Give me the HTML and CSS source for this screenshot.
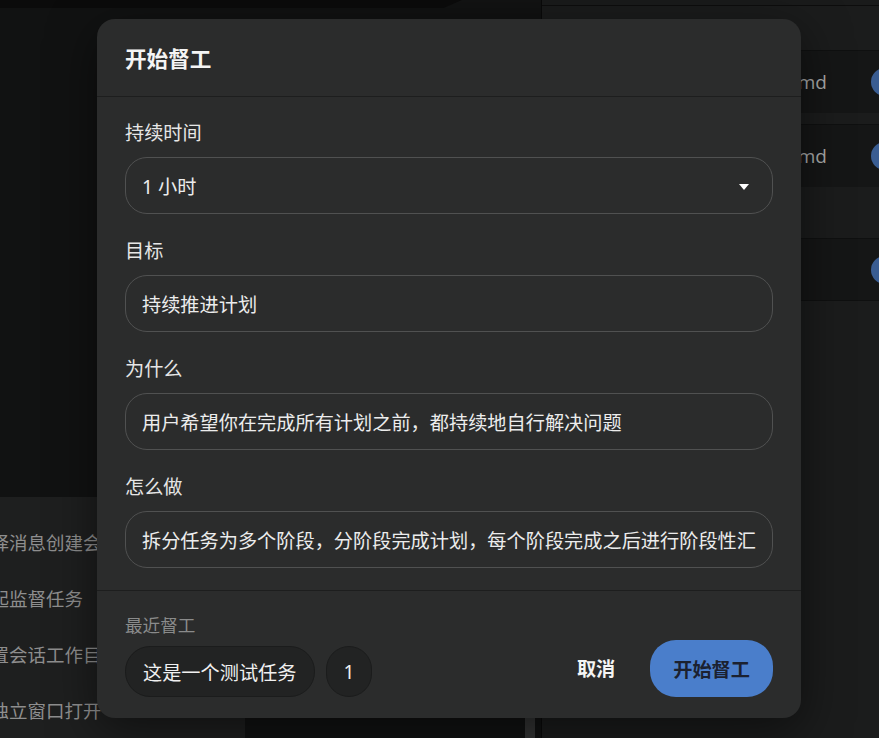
FILE: index.html
```html
<!DOCTYPE html>
<html lang="zh-CN">
<head>
<meta charset="utf-8">
<title>开始督工</title>
<link rel="stylesheet" href="styles.css">
</head>
<body>
<div class="app">
  <div class="left">
    <div class="topbar"></div>
    <div class="left-body">
      <div class="scroll"><div class="thumb"></div></div>
    </div>
  </div>
  <div class="right">
    <div class="r-head"></div>
    <div class="r-sep"></div>
    <div class="r-item"><span class="r-name">CLAUDE.md</span><span class="dot"></span></div>
    <div class="r-gap"></div>
    <div class="r-item"><span class="r-name">AGENTS.md</span><span class="dot"></span></div>
    <div class="r-gap tall"></div>
    <div class="r-item last"><span class="r-name"></span><span class="dot"></span></div>
    <div class="r-rest"></div>
  </div>
</div>

<div class="menu">
  <div class="menu-item">选择消息创建会话</div>
  <div class="menu-item">发起监督任务</div>
  <div class="menu-item">设置会话工作目录</div>
  <div class="menu-item">在独立窗口打开</div>
</div>

<div class="dialog">
  <div class="dlg-head">开始督工</div>
  <div class="dlg-body">
    <div class="field">
      <div class="label">持续时间</div>
      <div class="input select"><span class="val">1 小时</span><span class="caret"></span></div>
    </div>
    <div class="field">
      <div class="label">目标</div>
      <div class="input"><span class="val">持续推进计划</span></div>
    </div>
    <div class="field">
      <div class="label">为什么</div>
      <div class="input"><span class="val">用户希望你在完成所有计划之前，都持续地自行解决问题</span></div>
    </div>
    <div class="field">
      <div class="label">怎么做</div>
      <div class="input"><span class="val">拆分任务为多个阶段，分阶段完成计划，每个阶段完成之后进行阶段性汇报</span></div>
    </div>
  </div>
  <div class="dlg-foot">
    <div class="recent">
      <div class="recent-label">最近督工</div>
      <div class="chips">
        <div class="chip">这是一个测试任务</div>
        <div class="chip">1</div>
      </div>
    </div>
    <div class="actions">
      <div class="btn-cancel">取消</div>
      <div class="btn-primary">开始督工</div>
    </div>
  </div>
</div>
</body>
</html>
```
FILE: styles.css
```css
* { box-sizing: border-box; }
html, body { margin: 0; padding: 0; }
body {
  width: 879px;
  height: 738px;
  overflow: hidden;
  background: #121313;
  font-family: "Noto Sans", "Noto Sans CJK SC", sans-serif;
  position: relative;
}

.app {
  display: grid;
  grid-template-columns: 542px 1fr;
  height: 738px;
}

.left {
  display: flex;
  flex-direction: column;
  background: #121313;
  border-right: 1px solid #0a0a0a;
}
.topbar {
  height: 8px;
  width: 462px;
  background: #0b0b0b;
  clip-path: polygon(0 0, 100% 0, 96% 100%, 0 100%);
}
.left-body {
  flex: 1;
  display: flex;
  justify-content: flex-end;
  padding-right: 6px;
  background: #111212;
}
.scroll { width: 10px; }
.thumb {
  margin-top: 600px;
  height: 200px;
  background: #333434;
}

.right {
  display: flex;
  flex-direction: column;
  overflow: hidden;
  background: #1b1c1c;
}
.r-head { height: 6px; background: #1a1b1b; border-bottom: 1px solid #0d0d0d; }
.r-sep { height: 45px; background: #1b1c1c; border-bottom: 1px solid #0f1010; }
.r-item {
  height: 62px;
  background: #151616;
  display: flex;
  align-items: center;
}
.r-item.last { height: 62px; border-bottom: 1px solid #0f1010; }
.r-name {
  flex: none;
  width: 285px;
  text-align: right;
  color: #a9aaaa;
  font-size: 19px;
  line-height: 24px;
  font-family: "Open Sans", "Noto Sans", sans-serif;
  white-space: nowrap;
}
.dot {
  width: 28px;
  height: 28px;
  border-radius: 50%;
  background: #3a5d92;
  margin-left: 44px;
  flex: none;
}
.r-gap { height: 12px; background: #1b1c1c; border-bottom: 1px solid #0f1010; }
.r-gap.tall { height: 52px; }
.r-rest { flex: 1; background: #1b1c1c; }

.menu {
  position: absolute;
  left: -30px;
  top: 497px;
  width: 275px;
  height: 260px;
  background: #1e1f1f;
  border-radius: 12px;
  padding-top: 18px;
}
.menu-item {
  height: 56px;
  line-height: 56px;
  padding-left: 2px;
  color: #8e8e8e;
  font-size: 18.5px;
  white-space: nowrap;
}

.dialog {
  position: absolute;
  left: 97px;
  top: 19px;
  width: 704px;
  height: 699px;
  background: #2b2c2c;
  border-radius: 18px;
  box-shadow: 0 12px 48px rgba(0, 0, 0, 0.5);
  display: flex;
  flex-direction: column;
  overflow: hidden;
}
.dlg-head {
  height: 78px;
  flex: none;
  padding: 0 28px;
  display: flex;
  align-items: center;
  font-size: 21.6px;
  font-weight: 700;
  color: #f4f4f4;
  border-bottom: 1px solid #1d1e1e;
}
.dlg-body {
  padding: 23px 28px 22px;
  display: flex;
  flex-direction: column;
  gap: 24px;
  border-bottom: 1px solid #1d1e1e;
}
.field { display: flex; flex-direction: column; gap: 11px; }
.label {
  font-size: 19.2px;
  line-height: 26px;
  color: #e6e6e6;
}
.input {
  height: 57px;
  border: 1px solid #505151;
  border-radius: 22px;
  padding: 0 16px;
  display: flex;
  align-items: center;
  font-size: 19.2px;
  color: #ececec;
  white-space: nowrap;
}
.val {
  flex: 1;
  min-width: 0;
  overflow: hidden;
  white-space: nowrap;
}
.select { justify-content: space-between; padding-right: 23px; }
.caret {
  flex: none;
  width: 0;
  height: 0;
  border-left: 5.5px solid transparent;
  border-right: 5.5px solid transparent;
  border-top: 6px solid #ffffff;
  margin-top: 2px;
}

.dlg-foot {
  flex: 1;
  padding: 22px 28px 21px;
  display: flex;
  align-items: flex-end;
  justify-content: space-between;
}
.recent { display: flex; flex-direction: column; gap: 9px; }
.recent-label {
  font-size: 17.6px;
  line-height: 24px;
  color: #8a8b8b;
}
.chips { display: flex; gap: 11px; }
.chip {
  height: 51px;
  padding: 0 17px;
  border-radius: 25px;
  background: #222323;
  border: 1px solid #1b1c1c;
  display: flex;
  align-items: center;
  font-size: 19.2px;
  color: #f0f0f0;
}
.actions { display: flex; align-items: center; gap: 17px; }
.btn-cancel {
  padding: 0 18px;
  font-size: 19.2px;
  font-weight: 700;
  color: #f4f4f4;
  line-height: 57px;
}
.btn-primary {
  height: 57px;
  padding: 0 23px;
  border-radius: 26px;
  background: #4a7ecb;
  color: #1b2130;
  font-size: 19.2px;
  font-weight: 700;
  display: flex;
  align-items: center;
}
```
